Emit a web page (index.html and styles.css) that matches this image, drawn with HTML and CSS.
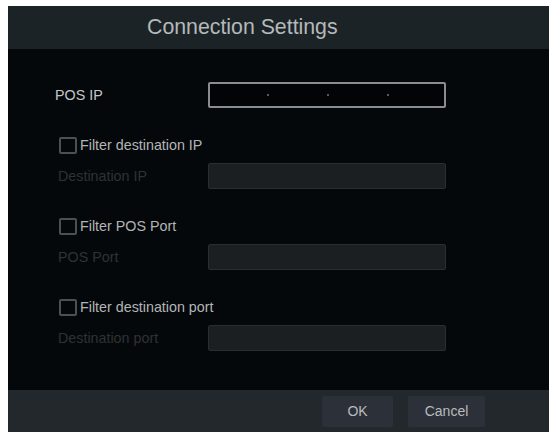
FILE: index.html
```html
<!DOCTYPE html>
<html lang="en">
<head>
    <meta charset="UTF-8">
    <meta name="viewport" content="width=device-width, initial-scale=1.0">
    <title>Connection Settings</title>
    <link rel="stylesheet" href="styles.css">
</head>
<body>

    <div class="dialog">
        <div class="dialog-header">Connection Settings</div>

        <div class="dialog-body">
            <div class="field">
                <label class="field-label main">POS IP</label>
                <div class="ip-input">
                    <span class="dot"></span>
                    <span class="dot"></span>
                    <span class="dot"></span>
                </div>
            </div>

            <div class="group">
                <label class="check"><span class="box"></span>Filter destination IP</label>
                <div class="field disabled">
                    <label class="field-label">Destination IP</label>
                    <div class="text-input"></div>
                </div>
            </div>

            <div class="group">
                <label class="check"><span class="box"></span>Filter POS Port</label>
                <div class="field disabled">
                    <label class="field-label">POS Port</label>
                    <div class="text-input"></div>
                </div>
            </div>

            <div class="group">
                <label class="check"><span class="box"></span>Filter destination port</label>
                <div class="field disabled">
                    <label class="field-label">Destination port</label>
                    <div class="text-input"></div>
                </div>
            </div>
        </div>

        <div class="dialog-footer">
            <button class="btn">OK</button>
            <button class="btn">Cancel</button>
        </div>
    </div>

</body>
</html>
```

FILE: styles.css
```css
* {
    margin: 0;
    padding: 0;
    box-sizing: border-box;
    font-family: "Liberation Sans", Arial, sans-serif;
}

body {
    background-color: #fff;
    padding: 6px 0 0 8px;
    overflow: hidden;
}

.dialog {
    height: 426px;
    display: flex;
    flex-direction: column;
    background-color: #05080a;
}

.dialog-header {
    height: 43px;
    display: flex;
    align-items: center;
    padding-left: 139px;
    background-color: #1c2326;
    color: #b4b9bb;
    font-size: 21.3px;
}

.dialog-body {
    flex: 1;
    padding: 33px 0 0 50px;
}

.field {
    display: flex;
    align-items: center;
    height: 26px;
}

.field-label {
    width: 150px;
    font-size: 14.3px;
    color: #c4c6c7;
}

.field-label.main {
    margin-left: -3px;
    width: 153px;
}

.ip-input,
.text-input {
    width: 238px;
    height: 26px;
    border-radius: 2px;
}

.ip-input {
    display: flex;
    align-items: center;
    gap: 58px;
    padding-left: 57px;
    border: 2px solid #8a8d8f;
    background-color: #020405;
}

.dot {
    width: 2px;
    height: 2px;
    background-color: #55595b;
}

.group {
    display: flex;
    flex-direction: column;
    gap: 9px;
    margin-top: 28px;
}

.check {
    display: flex;
    align-items: center;
    gap: 3px;
    height: 18px;
    margin-left: 1px;
    font-size: 14.3px;
    color: #b2b5b6;
}

.box {
    width: 18px;
    height: 17px;
    border: 2px solid #4c5053;
    border-radius: 2px;
}

.field.disabled .field-label {
    color: #2e3234;
}

.text-input {
    border: 1px solid #2a2e30;
    background-color: #1b1f21;
}

.dialog-footer {
    height: 42px;
    display: flex;
    align-items: center;
    gap: 15px;
    padding-left: 314px;
    background-color: #22282b;
}

.btn {
    height: 31px;
    border: none;
    border-radius: 2px;
    background-color: #2c3038;
    color: #b8bbbd;
    font-size: 14px;
}

.btn:first-child {
    width: 71px;
}

.btn:last-child {
    width: 77px;
}
```
